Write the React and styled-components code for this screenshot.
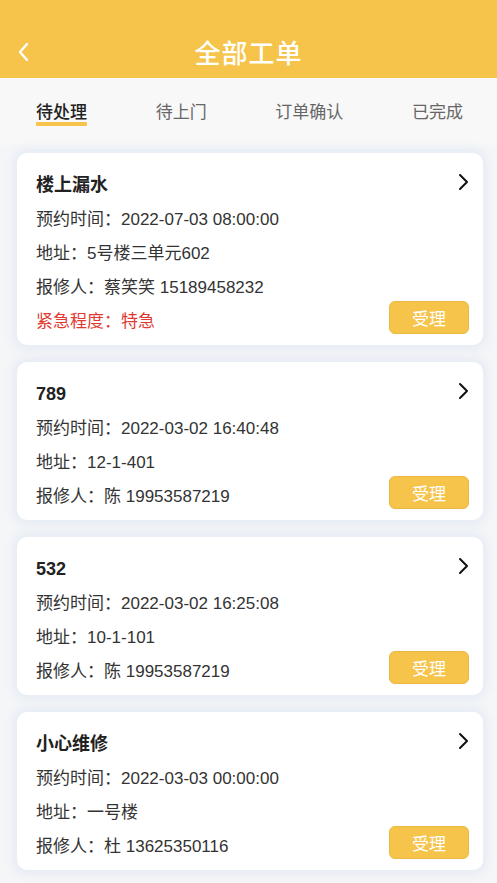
import React from 'react'
import styled, { createGlobalStyle } from 'styled-components'

const Global = createGlobalStyle`
  html, body {
    margin: 0;
    padding: 0;
    background: #f5f6f8;
    font-family: "Liberation Sans", "Noto Sans CJK SC", sans-serif;
  }
`

const Page = styled.div`
  width: 497px;
  min-height: 883px;
  background: #f5f6f8;
  display: flex;
  flex-direction: column;
`

const Header = styled.div`
  height: 78px;
  background: #f6c44b;
  display: flex;
  align-items: center;
  justify-content: center;
  position: relative;
  padding-top: 26px;
  box-sizing: border-box;
`

const Back = styled.div`
  position: absolute;
  left: 16px;
  top: 41px;
  display: flex;
`

const HeaderTitle = styled.h1`
  margin: 0;
  color: #fff;
  font-family: "Noto Sans CJK SC", sans-serif;
  font-size: 26px;
  font-weight: 500;
  letter-spacing: 1px;
  line-height: 1;
`

const Tabs = styled.div`
  height: 67px;
  background: #f8f8f8;
  display: flex;
  justify-content: space-between;
  padding: 0 34px 0 36px;
`

const Tab = styled.div`
  position: relative;
  display: flex;
  align-items: center;
  font-family: "Noto Sans CJK SC", sans-serif;
  font-size: 17px;
  color: ${p => (p.active ? '#222' : '#666')};
  font-weight: ${p => (p.active ? 500 : 400)};
  margin-top: -2px;

  &::after {
    content: '';
    display: ${p => (p.active ? 'block' : 'none')};
    position: absolute;
    left: 0;
    right: 0;
    top: 46px;
    height: 4px;
    border-radius: 1px;
    background: #f6c44b;
  }
`

const List = styled.div`
  display: flex;
  flex-direction: column;
  gap: 17px;
  padding: 8px 14px 14px 17px;
`

const Card = styled.div`
  background: #fff;
  border-radius: 10px;
  padding: 15px 14px 6px 19px;
  box-shadow: 0 0 10px 4px rgba(225, 232, 242, 0.8);
  display: flex;
  flex-direction: column;
`

const TitleRow = styled.div`
  display: flex;
  justify-content: space-between;
  align-items: flex-start;
  height: 35px;
`

const Title = styled.div`
  font-size: 18px;
  font-weight: 700;
  color: #222;
  line-height: 34px;
`

const Line = styled.div`
  font-size: 17px;
  color: ${p => (p.urgent ? '#e03a32' : '#333')};
  line-height: 34px;
  height: 34px;
  white-space: nowrap;
`

const Bottom = styled.div`
  display: flex;
  justify-content: space-between;
  align-items: flex-end;
`

const Accept = styled.button`
  width: 80px;
  height: 33px;
  margin: -10px 0 5px;
  border: 1px solid #ebb93f;
  border-radius: 6px;
  background: #f6c44b;
  color: #fff;
  font-size: 17px;
  font-family: "Noto Sans CJK SC", sans-serif;
  padding: 0;
`

const Chevron = () => (
  <svg width="12" height="18" viewBox="0 0 12 18" style={{ marginTop: 5 }}>
    <path d="M3 2l7 7-7 7" fill="none" stroke="#111" strokeWidth="2" strokeLinecap="round" strokeLinejoin="round" />
  </svg>
)

const orders = [
  { title: '楼上漏水', time: '2022-07-03 08:00:00', addr: '5号楼三单元602', who: '蔡笑笑 15189458232', urgent: '特急' },
  { title: '789', time: '2022-03-02 16:40:48', addr: '12-1-401', who: '陈 19953587219' },
  { title: '532', time: '2022-03-02 16:25:08', addr: '10-1-101', who: '陈 19953587219' },
  { title: '小心维修', time: '2022-03-03 00:00:00', addr: '一号楼', who: '杜 13625350116' },
]

const OrderCard = ({ order }) => (
  <Card>
    <TitleRow>
      <Title>{order.title}</Title>
      <Chevron />
    </TitleRow>
    <Line>预约时间：{order.time}</Line>
    <Line>地址：{order.addr}</Line>
    <Bottom>
      <div>
        <Line>报修人：{order.who}</Line>
        {order.urgent && <Line urgent>紧急程度：{order.urgent}</Line>}
      </div>
      <Accept>受理</Accept>
    </Bottom>
  </Card>
)

export default function App() {
  return (
    <Page>
      <Global />
      <Header>
        <Back>
          <svg width="14" height="22" viewBox="0 0 14 22">
            <path d="M11 3L4 11l7 8" fill="none" stroke="#fff" strokeWidth="2.4" strokeLinecap="round" strokeLinejoin="round" />
          </svg>
        </Back>
        <HeaderTitle>全部工单</HeaderTitle>
      </Header>
      <Tabs>
        <Tab active>待处理</Tab>
        <Tab>待上门</Tab>
        <Tab>订单确认</Tab>
        <Tab>已完成</Tab>
      </Tabs>
      <List>
        {orders.map((o, i) => (
          <OrderCard key={i} order={o} />
        ))}
      </List>
    </Page>
  )
}
